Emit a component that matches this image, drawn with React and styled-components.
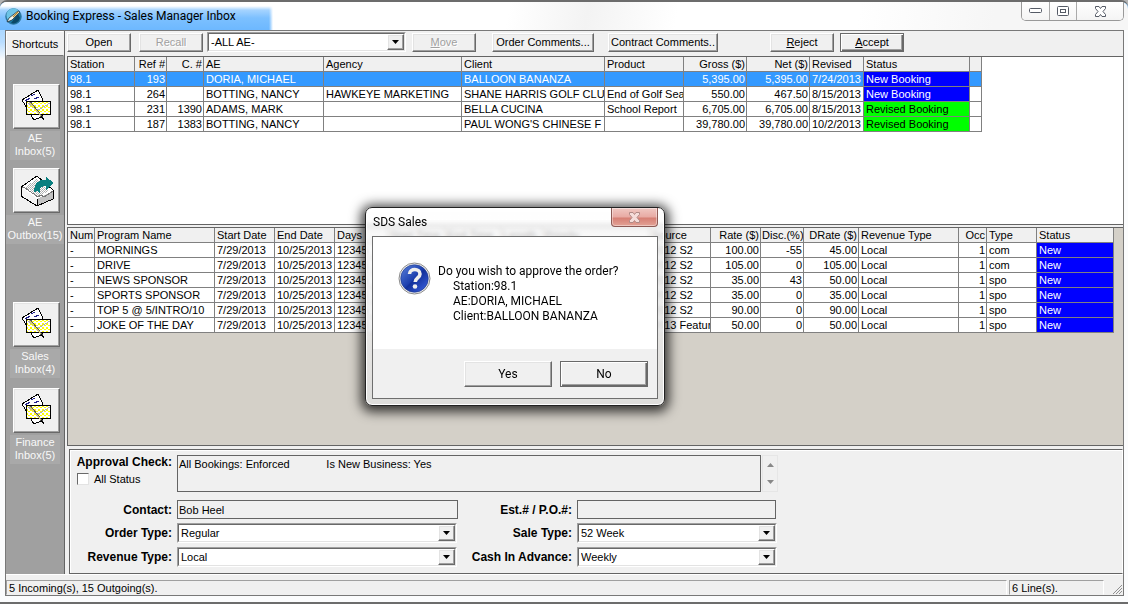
import React from "react";
import styled, { createGlobalStyle, css } from "styled-components";

const GlobalStyle = createGlobalStyle`
  * {
    box-sizing: border-box;
  }

  body {
    margin: 0;
    background: #b4b4b4;
    color: #000;
    font-family: "Liberation Sans", Arial, sans-serif;
    font-size: 11px;
    line-height: 14px;
  }

  button, input, select, textarea {
    font: inherit;
    color: inherit;
    margin: 0;
  }
`;

const raised = css`
  border: 1px solid;
  border-color: #fff #696969 #696969 #fff;
  box-shadow: inset -1px -1px 0 #a0a0a0, inset 1px 1px 0 #e3e3e3;
  background: #f0f0f0;
`;

const aeroFont = css`
  font-family: Roboto, "Noto Sans", sans-serif;
  font-size: 12px;
  line-height: 15px;
`;

const Window = styled.div`
  position: relative;
  display: flex;
  flex-direction: column;
  min-height: 100vh;
  padding: 0 4px 6px 5px;
  border-top: 2px solid #6c6c6c;
  border-bottom: 2px solid #6c6c6c;
  border-radius: 7px 7px 0 0;
  background: linear-gradient(to bottom, #8ccaff 0, #b9ddff 40px, #fbfcfd 58px);
`;

const TitleBar = styled.header`
  display: flex;
  justify-content: space-between;
  align-items: flex-start;
  height: 28px;
  margin: 0 -4px 0 -5px;
  padding-right: 4px;
  border-radius: 7px 7px 0 0;
  background: linear-gradient(100deg, #fff 45%, #f3f3f3 52%, #fff 60%, #fff 76%, #f6f6f6 88%);
`;

const TitleText = styled.h1`
  ${aeroFont}
  display: flex;
  align-items: center;
  gap: 4px;
  width: 273px;
  height: 28px;
  margin: 0;
  padding: 0 0 0 5px;
  font-weight: 400;
  border-radius: 7px 0 0 0;
  background:
    linear-gradient(to right, transparent 269px, #fff 273px),
    linear-gradient(to bottom, #fff 4px, #a6d4ff 8px, #7cc0ff 16px, #6db8ff);
  white-space: nowrap;
`;

const CaptionButtons = styled.div`
  display: flex;
  border: 1px solid #999;
  border-top: 0;
  border-radius: 0 0 5px 5px;
  overflow: hidden;
`;

const CaptionButton = styled.button`
  display: flex;
  align-items: center;
  justify-content: center;
  width: ${(p) => p.$width}px;
  height: 18px;
  padding: 0;
  border: 0;
  border-right: 1px solid #aaa;
  background: linear-gradient(#fff, #f4f4f4);

  &:last-child {
    border-right: 0;
  }
`;

const Client = styled.div`
  flex: 1;
  display: flex;
  flex-direction: column;
  border: 1px solid #787878;
  background: #f0f0f0;
  box-shadow: 4px 0 0 #fbfcfd;
`;

const Body = styled.div`
  flex: 1;
  display: flex;
`;

const Sidebar = styled.nav`
  flex: none;
  display: flex;
  flex-direction: column;
  align-items: center;
  width: 59px;
  border-right: 1px solid #646464;
  background: #a0a0a0;
`;

const SidebarHeading = styled.div`
  align-self: stretch;
  padding: 5px 0 4px;
  border: 1px solid;
  border-color: #fff #f0f0f0 #787878 #fff;
  background: #f0f0f0;
  text-align: center;
`;

const Shortcut = styled.div`
  display: flex;
  flex-direction: column;
  align-items: center;
  gap: 2px;
  margin-top: ${(p) => p.$space}px;
`;

const ShortcutButton = styled.button`
  ${raised}
  width: 47px;
  height: 45px;
  margin-left: 3px;
  padding: 0;

  svg {
    display: block;
  }
`;

const ShortcutLabel = styled.label`
  padding: 1px 1px 2px;
  min-width: 50px;
  background: #a9a9a9;
  color: #f8f8f8;
  line-height: 13px;
  text-align: center;
`;

const Main = styled.main`
  flex: 1;
  min-width: 0;
  display: flex;
  flex-direction: column;
  padding-left: 2px;
`;

const Toolbar = styled.div`
  display: flex;
  align-items: center;
  height: 25px;
  padding-bottom: 3px;
`;

const PushButton = styled.button`
  ${raised}
  width: ${(p) => p.$width}px;
  height: 19px;
  margin-left: ${(p) => p.$space || 0}px;
  padding: 0;
  white-space: nowrap;
  line-height: 14px;

  &:disabled {
    color: #a0a0a0;
    text-shadow: 1px 1px 0 #fff;
  }

  ${(p) => p.$default && css`
    border-color: #696969;
    box-shadow: inset 1px 1px 0 #fff, inset -1px -1px 0 #696969, inset -2px -2px 0 #a0a0a0;
  `}
`;

const SelectBox = styled.div`
  position: relative;
  width: ${(p) => p.$width}px;
  height: 20px;
  margin-left: ${(p) => p.$space || 0}px;
  margin-right: ${(p) => p.$after || 0}px;
  border: 1px solid;
  border-color: #a0a0a0 #fff #fff #a0a0a0;

  select {
    appearance: none;
    display: block;
    width: 100%;
    height: 18px;
    padding: 0 18px 0 2px;
    border: 1px solid;
    border-color: #696969 #e3e3e3 #e3e3e3 #696969;
    border-radius: 0;
    background: #fff;
    line-height: 14px;
  }

  span {
    ${raised}
    position: absolute;
    top: 1px;
    right: 1px;
    display: flex;
    align-items: center;
    justify-content: center;
    width: 17px;
    height: 16px;
    pointer-events: none;
  }
`;

const GridPanel = styled.section`
  flex: 1;
  margin-top: 2px;
  overflow: hidden;
  border: 1px solid #646464;
  border-right: 0;
  background: #d4d0c8;
`;

const BookingsPanel = styled(GridPanel)`
  flex: none;
  height: 169px;
  margin-top: 0;
  background: #fff;
`;

const Table = styled.table`
  table-layout: fixed;
  width: ${(p) => p.$width}px;
  border-collapse: separate;
  border-spacing: 0;
  background: #fff;
`;

const cell = css`
  height: 15px;
  padding: ${(p) => (p.$right ? "0 1px" : "0 0 0 2px")};
  border-right: 1px solid #808080;
  border-bottom: 1px solid #808080;
  overflow: hidden;
  white-space: nowrap;
  line-height: 14px;
  text-align: ${(p) => (p.$right ? "right" : "left")};
`;

const HeadCell = styled.th`
  ${cell}
  background: #f0f0f0;
  font-weight: 400;
`;

const Cell = styled.td`
  ${cell}
  background: ${(p) => p.$fill || "transparent"};
  color: ${(p) => p.$ink || "inherit"};
`;

const Row = styled.tr`
  background: ${(p) => (p.$selected ? "#3399ff" : "#fff")};
  color: ${(p) => (p.$selected ? "#fff" : "#000")};
`;

const FormPanel = styled.form`
  display: grid;
  grid-template-columns: 102px 281px 109px 199px;
  grid-template-rows: 41px 19px 20px 20px;
  row-gap: 4px;
  column-gap: 5px;
  margin: 3px 0 0 2px;
  padding: 5px 0 6px;
  border: 1px solid #646464;
  border-right-color: #fff;
  box-shadow: inset 1px 1px 0 #fff;
`;

const FieldLabel = styled.label`
  align-self: center;
  text-align: right;
  font-size: 12px;
  font-weight: 700;
  white-space: nowrap;
`;

const ApprovalLabels = styled.div`
  display: flex;
  flex-direction: column;
  gap: 3px;

  ${FieldLabel} {
    align-self: flex-end;
  }
`;

const CheckLabel = styled.label`
  align-self: flex-start;
  display: flex;
  align-items: center;
  gap: 5px;
  margin-left: 7px;

  input {
    appearance: none;
    width: 12px;
    height: 12px;
    border: 1px solid;
    border-color: #696969 #e3e3e3 #e3e3e3 #696969;
    background: #fff;
  }
`;

const ApprovalField = styled.div`
  grid-column: 2 / -1;
  display: flex;
  align-items: flex-start;
  gap: 1px;
  margin-right: -2px;
`;

const ApprovalText = styled.textarea`
  flex: 1;
  height: 37px;
  padding: 1px;
  border: 1px solid #646464;
  border-radius: 0;
  background: #f0f0f0;
  resize: none;
  overflow: hidden;
`;

const Spinner = styled.div`
  display: flex;
  flex-direction: column;
  width: 16px;
  height: 37px;
  border: 1px solid #e6e6e6;

  button {
    flex: 1;
    display: flex;
    align-items: center;
    justify-content: center;
    padding: 0;
    border: 0;
    background: #f0f0f0;
  }
`;

const TextField = styled.input`
  width: 100%;
  height: 19px;
  padding: 0 1px;
  border: 1px solid #646464;
  border-radius: 0;
  background: #f0f0f0;
`;

const StatusBar = styled.footer`
  display: flex;
  gap: 2px;
  height: 21px;
  padding: 5px 0 0;
  border-top: 1px solid #fff;
`;

const StatusPanel = styled.div`
  flex: ${(p) => (p.$width ? "none" : "1")};
  width: ${(p) => (p.$width ? `${p.$width}px` : "auto")};
  padding-left: 2px;
  border: 1px solid;
  border-color: #a0a0a0 #fff #f0f0f0 #a0a0a0;
`;

const Grip = styled.div`
  display: flex;
  align-items: flex-end;
  justify-content: flex-end;
  width: 17px;
  padding: 0 1px 1px 0;
`;

const Dialog = styled.div`
  ${aeroFont}
  position: absolute;
  top: 205px;
  left: 365px;
  display: flex;
  flex-direction: column;
  width: 300px;
  padding: 0 6px 6px;
  border: 1px solid #222;
  border-radius: 7px;
  background: linear-gradient(rgba(255, 255, 255, 0.7), rgba(225, 225, 225, 0.8));
  backdrop-filter: blur(2px);
  box-shadow: inset 0 0 0 1px #fff, 0 2px 12px 4px rgba(0, 0, 0, 0.75);
`;

const DialogHeader = styled.div`
  display: flex;
  justify-content: space-between;
  height: 28px;

  h2 {
    margin: 7px 0 0 1px;
    font-size: 12px;
    font-weight: 400;
  }
`;

const DialogClose = styled.button`
  display: flex;
  align-items: center;
  justify-content: center;
  width: 47px;
  height: 19px;
  padding: 0;
  border: 1px solid #8d5a55;
  border-top: 0;
  border-radius: 0 0 4px 4px;
  background: linear-gradient(#f0c8c3 0, #e8aaa3 9px, #d67f74 10px, #e3a396);
  box-shadow: inset 0 0 0 1px rgba(255, 255, 255, 0.4);
`;

const DialogBody = styled.div`
  border: 1px solid #6e6e6e;
  background: #f0f0f0;
`;

const DialogMessage = styled.div`
  display: flex;
  gap: 7px;
  height: 112px;
  padding: 25px 0 0 25px;
  background: #fff;

  p {
    margin: 2px 0 0;
  }
`;

const Detail = styled.span`
  display: block;
  padding-left: 15px;
`;

const DialogActions = styled.div`
  display: flex;
  justify-content: flex-end;
  gap: 8px;
  padding: 12px 9px 11px;
`;

const DialogButton = styled(PushButton)`
  width: 88px;
  height: 26px;
`;

function AppIcon() {
  return (
    <svg width="17" height="17" viewBox="0 0 17 17" aria-hidden="true">
      <circle cx="8.5" cy="8.5" r="7.7" fill="#1b7aa6" stroke="#2a6f95" />
      <path d="M1.500 7a7 7 0 0 1 12-4.500L3 12A7 7 0 0 1 1.500 7z" fill="#6cc3e6" />
      <path d="M6 15a7 7 0 0 0 9-5l-2-4z" fill="#0b4867" />
      <path d="M2 14l2-4 9-7 2 1-8 8z" fill="#f3f6ee" stroke="#16242c" strokeWidth=".7" />
      <path d="M8 9l5-5" stroke="#b98a2c" strokeWidth="1.3" />
    </svg>
  );
}

function MailIcon() {
  return (
    <svg width="45" height="43" viewBox="0 0 45 43" shapeRendering="crispEdges" aria-hidden="true">
      <defs>
        <pattern id="dots" width="4" height="4" patternUnits="userSpaceOnUse">
          <rect width="4" height="4" fill="#fff" />
          <rect width="2" height="2" fill="#ff0" />
          <rect x="2" y="2" width="2" height="1" fill="#ff0" />
        </pattern>
      </defs>
      <path d="M8 15L24 5l4 8 3 14-4 5-7 3z" fill="#fff" stroke="#000" />
      <path d="M11 16l3-2M13 15l3-2M17 11l4-2M20 14l5-2" stroke="#22228c" fill="none" />
      <rect x="12.500" y="16.500" width="24" height="13" fill="url(#dots)" stroke="#000" />
      <path d="M14 18l8 6h4l10-6" fill="none" stroke="#b0b0b0" />
      <path d="M16 17l12 15" stroke="#555" strokeWidth="2" />
      <path d="M15 17l12 14" stroke="#d8cc70" />
      <path d="M27 31l3 4" stroke="#000" />
    </svg>
  );
}

function OutboxIcon() {
  return (
    <svg width="45" height="43" viewBox="0 0 45 43" shapeRendering="crispEdges" aria-hidden="true">
      <defs>
        <pattern id="mesh" width="2" height="2" patternUnits="userSpaceOnUse">
          <rect width="2" height="2" fill="#fff" />
          <rect width="1" height="1" fill="#aaa" />
          <rect x="1" y="1" width="1" height="1" fill="#bbb" />
        </pattern>
      </defs>
      <path d="M7 18L23 7l16 14v9l-16 7L7 27z" fill="#fff" stroke="#000" />
      <path d="M11 18l12-8 12 12-11 6z" fill="url(#mesh)" />
      <path d="M7 18l16 12v7L7 27z" fill="#f4f4f4" />
      <path d="M23 30l16-8v8l-16 7z" fill="#c3c3c3" />
      <path d="M7 18l4 1 13 9 3-2 3 2 9-6" fill="none" stroke="#777" />
      <path d="M7 18v9l16 10 16-7v-9M23 30v7" fill="none" stroke="#000" />
      <path d="M20 23c0-9 5-13 12-12V8l8 6-8 7v-4c-5 0-7 2-6 8l-3-3z" fill="#0a8080" />
    </svg>
  );
}

function QuestionIcon() {
  return (
    <svg width="33" height="33" viewBox="0 0 33 33" aria-hidden="true">
      <defs>
        <linearGradient id="ball" x1="0" y1="0" x2="1" y2="1">
          <stop offset="0" stopColor="#5c83dc" />
          <stop offset=".48" stopColor="#1c3fae" />
          <stop offset=".52" stopColor="#12309a" />
          <stop offset="1" stopColor="#3f66e6" />
        </linearGradient>
      </defs>
      <circle cx="16.500" cy="16.500" r="15.500" fill="#f1f1f1" stroke="#8a8a8a" />
      <circle cx="16.500" cy="16.500" r="13.800" fill="url(#ball)" stroke="#1a3486" strokeWidth=".6" />
      <path d="M11.500 12c.2-6 10.500-6 10.500 0 0 4-4.800 3.800-4.800 8" fill="none" stroke="#eee" strokeWidth="3.600" />
      <circle cx="17" cy="24.500" r="2.300" fill="#eee" />
    </svg>
  );
}

function CrossIcon({ fill, stroke }) {
  return (
    <svg width="13" height="11" viewBox="0 0 13 11" aria-hidden="true">
      <path
        d="M1.500 .500h3.500l1.500 2 1.500-2h3.500v2L9 5.500l2.500 3v2H8l-1.500-2-1.500 2H1.500v-2l2.500-3-2.500-3z"
        fill={fill}
        stroke={stroke}
      />
    </svg>
  );
}

function Arrow({ up, fill = "#000" }) {
  return (
    <svg width="7" height="4" viewBox="0 0 7 4" aria-hidden="true">
      <path d={up ? "M0 4h7L3.500 0z" : "M0 0h7L3.500 4z"} fill={fill} />
    </svg>
  );
}

function Select({ id, label, value, ...rest }) {
  return (
    <SelectBox {...rest}>
      <select id={id} aria-label={label} defaultValue={value}>
        <option>{value}</option>
      </select>
      <span><Arrow /></span>
    </SelectBox>
  );
}

const bookingColumns = [
  { title: "Station", width: 67 },
  { title: "Ref #", width: 32, right: true },
  { title: "C. #", width: 37, right: true },
  { title: "AE", width: 120 },
  { title: "Agency", width: 138 },
  { title: "Client", width: 143 },
  { title: "Product", width: 79 },
  { title: "Gross ($)", width: 63, right: true },
  { title: "Net ($)", width: 63, right: true },
  { title: "Revised", width: 54 },
  { title: "Status", width: 106 },
  { title: "", width: 12 },
];

const bookings = [
  ["98.1", "193", "", "DORIA, MICHAEL", "", "BALLOON BANANZA", "", "5,395.00", "5,395.00", "7/24/2013", "New Booking", ""],
  ["98.1", "264", "", "BOTTING, NANCY", "HAWKEYE MARKETING", "SHANE HARRIS GOLF CLU", "End of Golf Sea", "550.00", "467.50", "8/15/2013", "New Booking", ""],
  ["98.1", "231", "1390", "ADAMS, MARK", "", "BELLA CUCINA", "School Report", "6,705.00", "6,705.00", "8/15/2013", "Revised Booking", ""],
  ["98.1", "187", "1383", "BOTTING, NANCY", "", "PAUL WONG'S CHINESE F", "", "39,780.00", "39,780.00", "10/2/2013", "Revised Booking", ""],
];

const lineColumns = [
  { title: "Num", width: 27 },
  { title: "Program Name", width: 120 },
  { title: "Start Date", width: 60 },
  { title: "End Date", width: 60 },
  { title: "Days", width: 53 },
  { title: "Start Time", width: 57 },
  { title: "End Time", width: 56 },
  { title: "Length", width: 42 },
  { title: "Priority", width: 107 },
  { title: "Source", width: 61 },
  { title: "Rate ($)", width: 50, right: true },
  { title: "Disc.(%)", width: 43, right: true },
  { title: "DRate ($)", width: 55, right: true },
  { title: "Revenue Type", width: 100 },
  { title: "Occ", width: 28, right: true },
  { title: "Type", width: 50 },
  { title: "Status", width: 77 },
];

const programs = [
  ["MORNINGS", "2012 S2", "100.00", "-55", "45.00", "com"],
  ["DRIVE", "2012 S2", "105.00", "0", "105.00", "com"],
  ["NEWS SPONSOR", "2012 S2", "35.00", "43", "50.00", "spo"],
  ["SPORTS SPONSOR", "2012 S2", "35.00", "0", "35.00", "spo"],
  ["TOP 5 @ 5/INTRO/10", "2012 S2", "90.00", "0", "90.00", "spo"],
  ["JOKE OF THE DAY", "2013 Featur", "50.00", "0", "50.00", "spo"],
];

const lines = programs.map(([name, source, rate, disc, drate, type]) => [
  "-", name, "7/29/2013", "10/25/2013", "12345", "", "", "", "", source, rate, disc, drate, "Local", "1", type, "New",
]);

const statusColors = {
  "New Booking": { fill: "#0000ff", ink: "#fff" },
  "Revised Booking": { fill: "#00ff00", ink: "#000" },
  New: { fill: "#0000ff", ink: "#fff" },
};

const shortcuts = [
  { id: "ae-inbox", title: ["AE", "Inbox(5)"], space: 28, icon: <MailIcon /> },
  { id: "ae-outbox", title: ["AE", "Outbox(15)"], space: 8, icon: <OutboxIcon /> },
  { id: "sales-inbox", title: ["Sales", "Inbox(4)"], space: 58, icon: <MailIcon /> },
  { id: "finance-inbox", title: ["Finance", "Inbox(5)"], space: 10, icon: <MailIcon /> },
];

function DataGrid({ columns, rows, selected }) {
  const width = columns.reduce((sum, c) => sum + c.width, 0);
  return (
    <Table $width={width}>
      <colgroup>
        {columns.map((c, i) => <col key={i} width={c.width} />)}
      </colgroup>
      <thead>
        <tr>
          {columns.map((c, i) => <HeadCell key={i} $right={c.right}>{c.title}</HeadCell>)}
        </tr>
      </thead>
      <tbody>
        {rows.map((row, r) => (
          <Row key={r} $selected={r === selected}>
            {row.map((value, i) => {
              const color = statusColors[value] || {};
              return (
                <Cell key={i} $right={columns[i].right} $fill={color.fill} $ink={color.ink}>
                  {value}
                </Cell>
              );
            })}
          </Row>
        ))}
      </tbody>
    </Table>
  );
}

export default function App() {
  return (
    <>
      <GlobalStyle />
      <Window>
        <TitleBar>
          <TitleText><AppIcon />Booking Express - Sales Manager Inbox</TitleText>
          <CaptionButtons>
            <CaptionButton $width={28} aria-label="Minimize">
              <svg width="13" height="6" viewBox="0 0 13 6">
                <rect x=".5" y=".5" width="12" height="4" rx="1" fill="#fff" stroke="#555b66" />
              </svg>
            </CaptionButton>
            <CaptionButton $width={27} aria-label="Maximize">
              <svg width="12" height="10" viewBox="0 0 12 10">
                <rect x=".5" y=".5" width="11" height="9" rx="1" fill="#fff" stroke="#555b66" />
                <rect x="3.500" y="3.500" width="5" height="3" fill="#fff" stroke="#555b66" />
              </svg>
            </CaptionButton>
            <CaptionButton $width={46} aria-label="Close">
              <CrossIcon fill="#fff" stroke="#555b66" />
            </CaptionButton>
          </CaptionButtons>
        </TitleBar>

        <Client>
          <Body>
            <Sidebar>
              <SidebarHeading>Shortcuts</SidebarHeading>
              {shortcuts.map((s) => (
                <Shortcut key={s.id} $space={s.space}>
                  <ShortcutButton id={s.id}>{s.icon}</ShortcutButton>
                  <ShortcutLabel htmlFor={s.id}>{s.title[0]}<br />{s.title[1]}</ShortcutLabel>
                </Shortcut>
              ))}
            </Sidebar>

            <Main>
              <Toolbar>
                <PushButton $width={64}>Open</PushButton>
                <PushButton $width={64} $space={8} disabled>Recall</PushButton>
                <Select label="AE" value="-ALL AE-" $width={199} $space={4} $after={6} />
                <PushButton $width={64} disabled><u>M</u>ove</PushButton>
                <PushButton $width={102} $space={16}>Order Comments...</PushButton>
                <PushButton $width={110} $space={14}>Contract Comments..</PushButton>
                <PushButton $width={64} $space={52}><u>R</u>eject</PushButton>
                <PushButton $width={64} $space={6} $default><u>A</u>ccept</PushButton>
              </Toolbar>

              <BookingsPanel>
                <DataGrid columns={bookingColumns} rows={bookings} selected={0} />
              </BookingsPanel>
              <GridPanel>
                <DataGrid columns={lineColumns} rows={lines} />
              </GridPanel>

              <FormPanel onSubmit={(e) => e.preventDefault()}>
                <ApprovalLabels>
                  <FieldLabel htmlFor="approval">Approval Check:</FieldLabel>
                  <CheckLabel><input type="checkbox" />All Status</CheckLabel>
                </ApprovalLabels>
                <ApprovalField>
                  <ApprovalText
                    id="approval"
                    readOnly
                    value={"All Bookings: Enforced            Is New Business: Yes"}
                  />
                  <Spinner>
                    <button type="button" aria-label="Scroll up"><Arrow up fill="#888" /></button>
                    <button type="button" aria-label="Scroll down"><Arrow fill="#888" /></button>
                  </Spinner>
                </ApprovalField>

                <FieldLabel htmlFor="contact">Contact:</FieldLabel>
                <TextField id="contact" readOnly value="Bob Heel" />
                <FieldLabel htmlFor="estimate">Est.# / P.O.#:</FieldLabel>
                <TextField id="estimate" readOnly value="" />

                <FieldLabel htmlFor="order-type">Order Type:</FieldLabel>
                <Select id="order-type" value="Regular" $width={280} />
                <FieldLabel htmlFor="sale-type">Sale Type:</FieldLabel>
                <Select id="sale-type" value="52 Week" $width={200} />

                <FieldLabel htmlFor="revenue-type">Revenue Type:</FieldLabel>
                <Select id="revenue-type" value="Local" $width={280} />
                <FieldLabel htmlFor="cash">Cash In Advance:</FieldLabel>
                <Select id="cash" value="Weekly" $width={200} />
              </FormPanel>
            </Main>
          </Body>

          <StatusBar>
            <StatusPanel>5 Incoming(s), 15 Outgoing(s).</StatusPanel>
            <StatusPanel $width={95}>6 Line(s).</StatusPanel>
            <Grip>
              <svg width="9" height="9" viewBox="0 0 9 9" aria-hidden="true">
                <path d="M0 9L9 0M3 9l6-6M6 9l3-3" stroke="#909090" />
              </svg>
            </Grip>
          </StatusBar>
        </Client>

        <Dialog role="dialog" aria-labelledby="dialog-title">
          <DialogHeader>
            <h2 id="dialog-title">SDS Sales</h2>
            <DialogClose aria-label="Close"><CrossIcon fill="#f5dcd9" stroke="#b08a86" /></DialogClose>
          </DialogHeader>
          <DialogBody>
            <DialogMessage>
              <QuestionIcon />
              <p>
                Do you wish to approve the order?
                <Detail>Station:98.1</Detail>
                <Detail>AE:DORIA, MICHAEL</Detail>
                <Detail>Client:BALLOON BANANZA</Detail>
              </p>
            </DialogMessage>
            <DialogActions>
              <DialogButton>Yes</DialogButton>
              <DialogButton $default>No</DialogButton>
            </DialogActions>
          </DialogBody>
        </Dialog>
      </Window>
    </>
  );
}
